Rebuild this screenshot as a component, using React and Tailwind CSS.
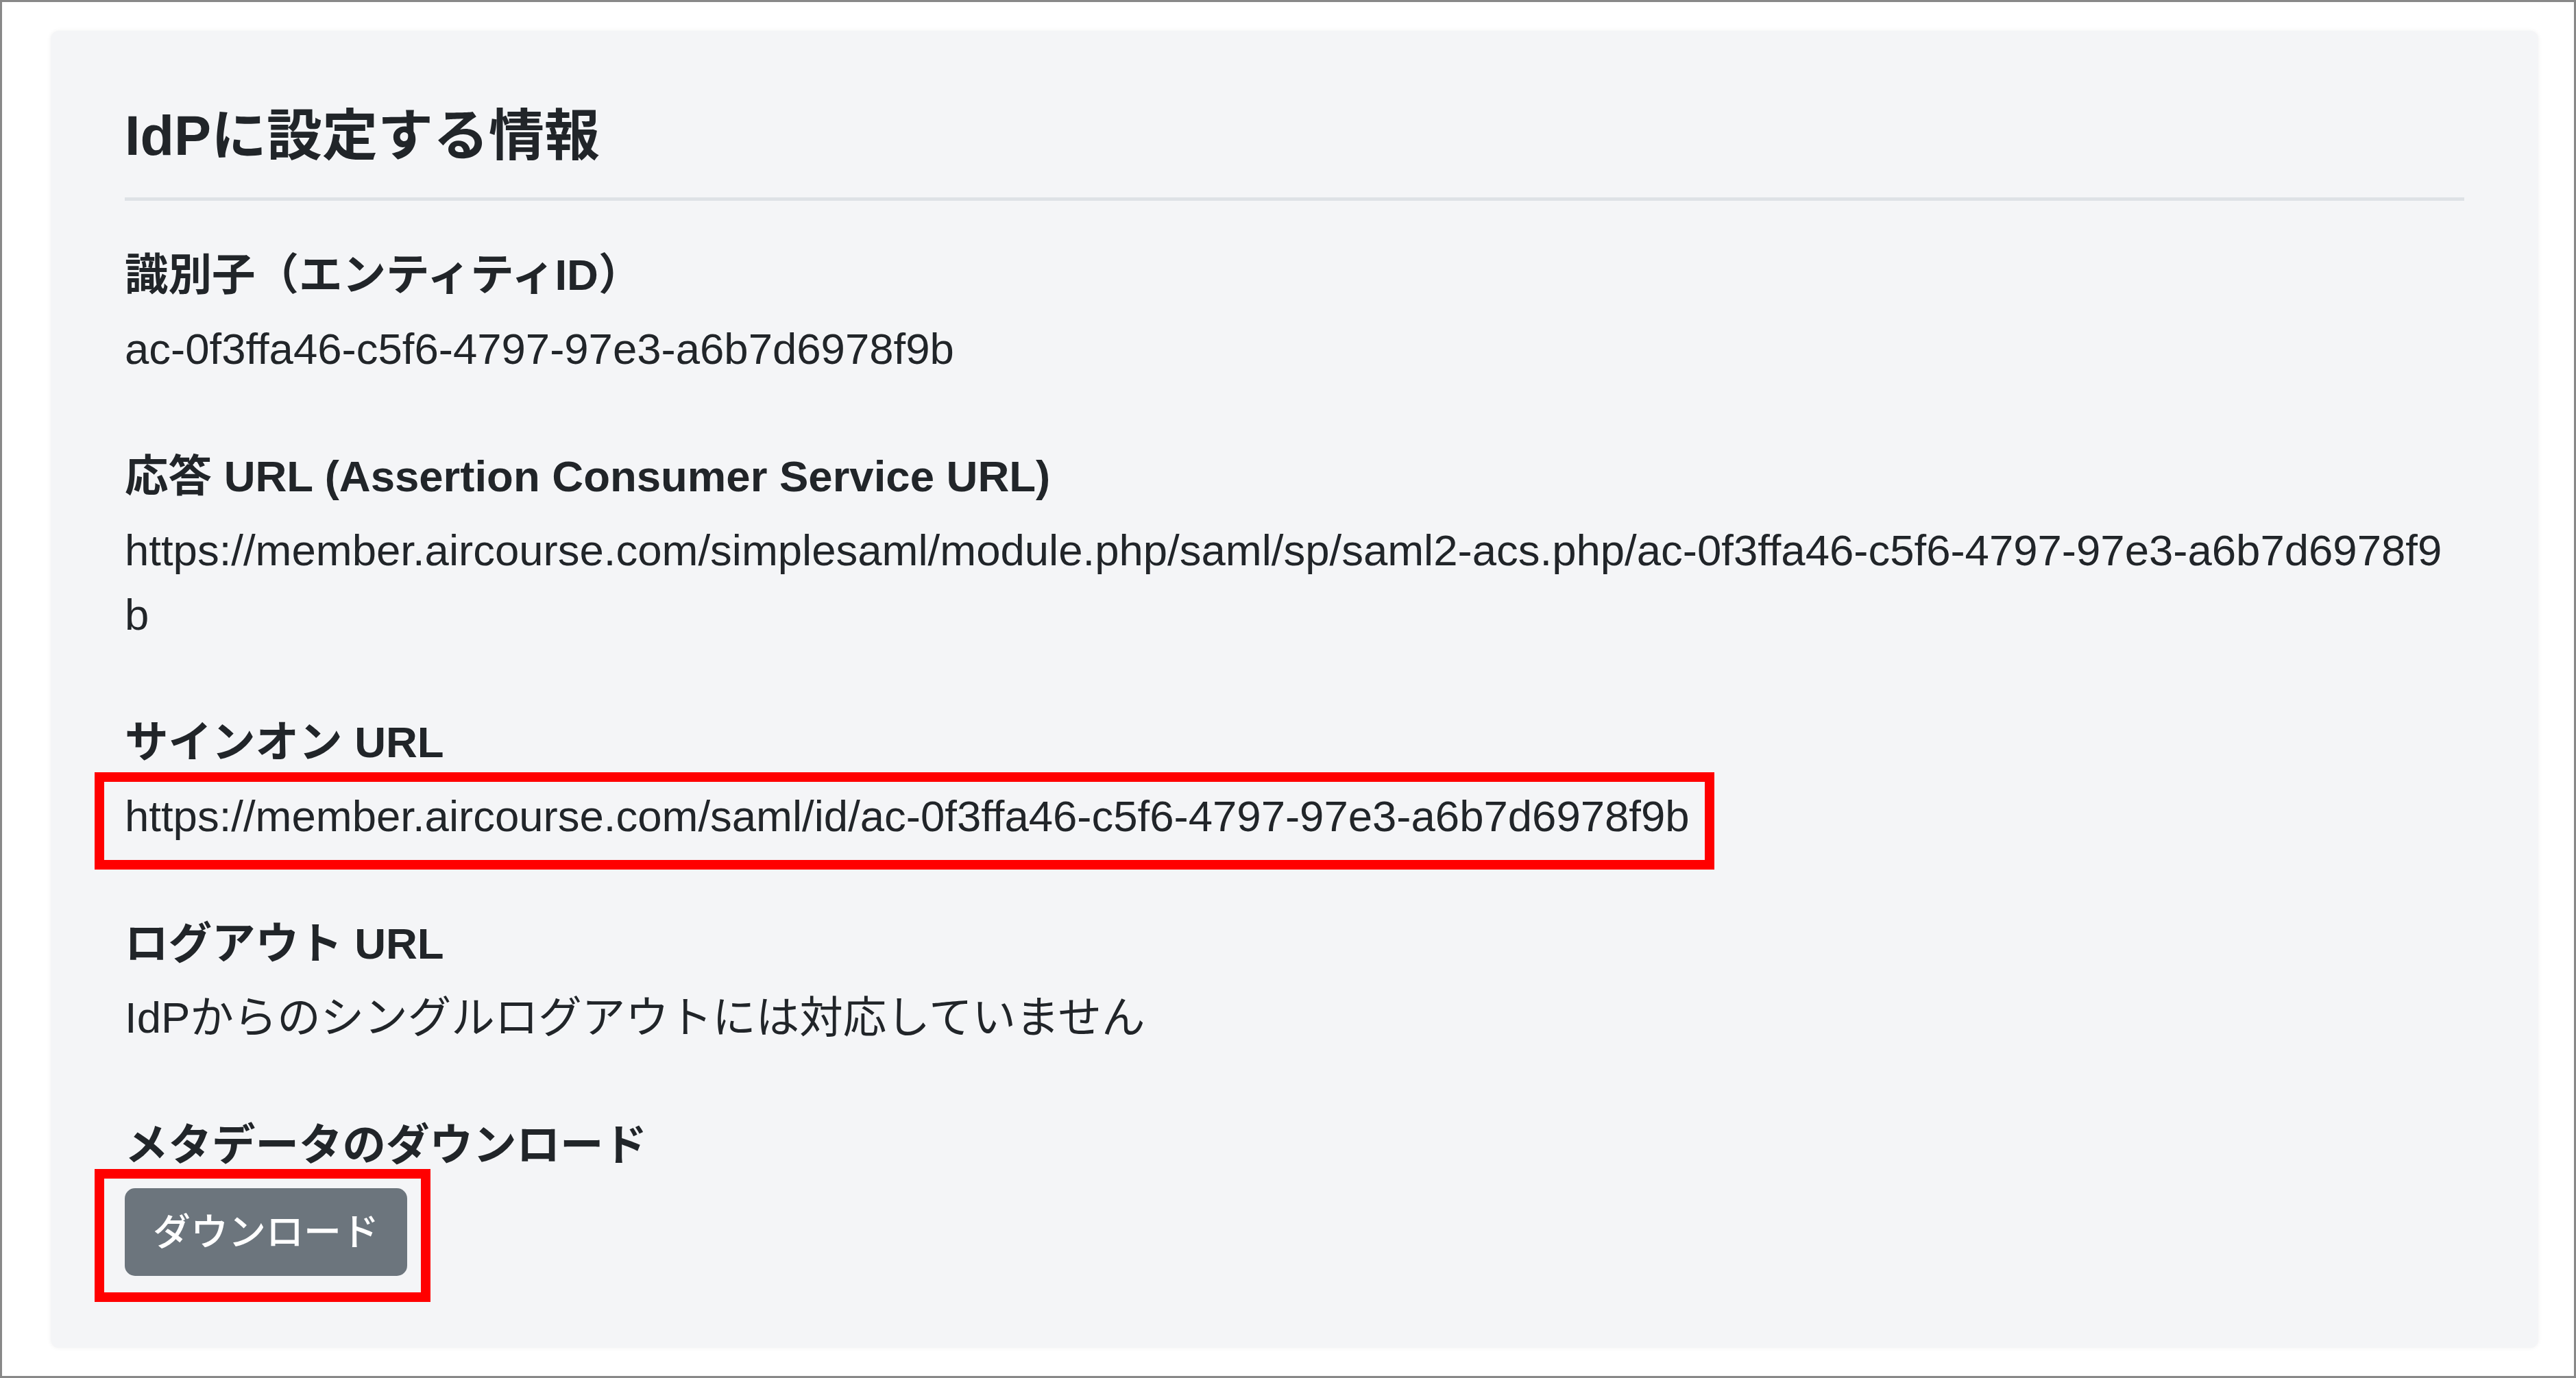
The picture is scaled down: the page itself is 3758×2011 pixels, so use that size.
import React from 'react';

const sections = [
  { label: '識別子（エンティティID）', value: 'ac-0f3ffa46-c5f6-4797-97e3-a6b7d6978f9b' },
  {
    label: '応答 URL (Assertion Consumer Service URL)',
    value: 'https://member.aircourse.com/simplesaml/module.php/saml/sp/saml2-acs.php/ac-0f3ffa46-c5f6-4797-97e3-a6b7d6978f9b',
  },
  { label: 'サインオン URL', value: 'https://member.aircourse.com/saml/id/ac-0f3ffa46-c5f6-4797-97e3-a6b7d6978f9b', marked: true },
  { label: 'ログアウト URL', value: 'IdPからのシングルログアウトには対応していません' },
];

const Section = ({ label, value, marked }) => (
  <div className="mb-[92px]">
    <div className="font-bold leading-[94px] mb-[14px]">{label}</div>
    <div className="relative max-w-[3400px] break-all leading-[94px]">
      {marked && (
        <div className="absolute -left-[44px] -top-[17px] w-[2363px] h-[142px] border-[14px] border-[#ff0000]" />
      )}
      {value}
    </div>
  </div>
);

export default function App() {
  return (
    <div className="w-[3758px] h-[2011px] border-[3px] border-[#888888] bg-white pl-[71px] pt-[42px] font-['Liberation_Sans','Noto_Sans_CJK_JP',sans-serif] text-[63.5px] text-[#212529]">
      <div className="w-[3629px] rounded-[12px] bg-[#f4f5f7] shadow-[0_0_6px_rgba(0,0,0,0.06)] pt-[106px] pb-[105px] px-[108px]">
        <h2 className="text-[81px] font-bold leading-[94px]">IdPに設定する情報</h2>
        <div className="mt-[43px] h-[5px] bg-[#dee2e6]" />
        <div className="mt-[61px]">
          {sections.map((s) => (
            <Section key={s.label} {...s} />
          ))}
          <div className="font-bold leading-[94px] mb-[16px]">メタデータのダウンロード</div>
          <div className="relative inline-block">
            <div className="absolute -left-[44px] -top-[28px] w-[490px] h-[194px] border-[14px] border-[#ff0000]" />
            <button className="h-[128px] w-[412px] rounded-[15px] bg-[#6c757d] text-white text-[55px] font-medium flex items-center justify-center">
              ダウンロード
            </button>
          </div>
        </div>
      </div>
    </div>
  );
}
